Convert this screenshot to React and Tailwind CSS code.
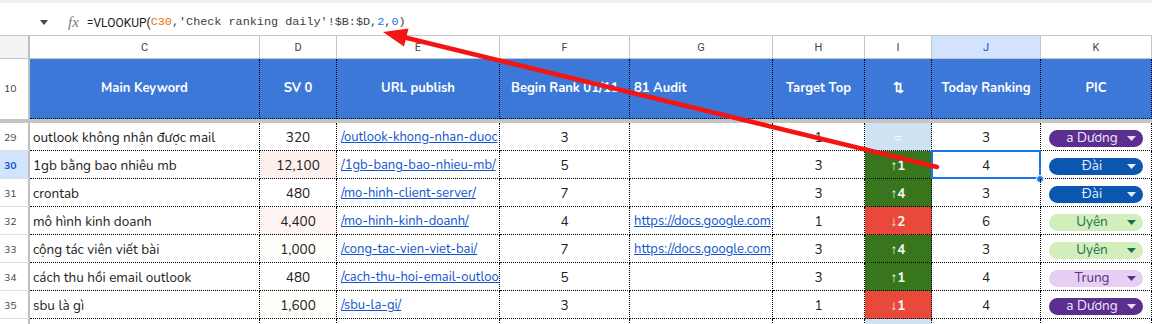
const cols = "grid grid-cols-[30px_230px_77px_163px_130px_143px_92px_67px_109px_111px]";

const rows = [
  { n: 29, kw: "outlook không nhận được mail", sv: "320", svBg: "", url: "/outlook-khong-nhan-duoc", begin: "3", audit: "", target: "1", delta: "=", today: "3", pic: "duong" },
  { n: 30, kw: "1gb bằng bao nhiêu mb", sv: "12,100", svBg: "bg-[#fcefec]", url: "/1gb-bang-bao-nhieu-mb/", begin: "5", audit: "", target: "3", delta: "↑1", today: "4", pic: "dai", selected: true },
  { n: 31, kw: "crontab", sv: "480", svBg: "", url: "/mo-hinh-client-server/", begin: "7", audit: "", target: "3", delta: "↑4", today: "3", pic: "dai" },
  { n: 32, kw: "mô hình kinh doanh", sv: "4,400", svBg: "bg-[#fdf3f0]", url: "/mo-hinh-kinh-doanh/", begin: "4", audit: "https://docs.google.com", target: "1", delta: "↓2", today: "6", pic: "uyen" },
  { n: 33, kw: "cộng tác viên viết bài", sv: "1,000", svBg: "bg-[#fefdf9]", url: "/cong-tac-vien-viet-bai/", begin: "7", audit: "https://docs.google.com", target: "3", delta: "↑4", today: "3", pic: "uyen" },
  { n: 34, kw: "cách thu hồi email outlook", sv: "480", svBg: "", url: "/cach-thu-hoi-email-outlook/", begin: "5", audit: "", target: "3", delta: "↑1", today: "4", pic: "trung" },
  { n: 35, kw: "sbu là gì", sv: "1,600", svBg: "bg-[#fefdf9]", url: "/sbu-la-gi/", begin: "3", audit: "", target: "1", delta: "↓1", today: "4", pic: "duong" },
];

const chips = {
  duong: { label: "a Dương", box: "bg-[#5b2f8f] text-[#f1e8fb]", tri: "#e9defa" },
  dai: { label: "Đài", box: "bg-[#0b57b0] text-[#e3eeff]", tri: "#e3eeff" },
  uyen: { label: "Uyên", box: "bg-[#d4edbc] text-[#11734b]", tri: "#11734b" },
  trung: { label: "Trung", box: "bg-[#e6cff2] text-[#5a3286]", tri: "#5a3286" },
};

const letters = ["C", "D", "E", "F", "G", "H", "I", "J", "K"];

const cell = "border-r border-b border-dotted border-black overflow-hidden whitespace-nowrap flex items-center pt-[3px]";

function deltaBg(d) {
  if (d === "=") return "bg-[#cfe2f3]";
  if (d.startsWith("↑")) return "bg-[#38761d]";
  return "bg-[#e8493b]";
}

function Chip({ kind }) {
  const c = chips[kind];
  return (
    <div className={`mx-auto w-[94px] h-[17px] rounded-full flex items-center pl-2 pr-[7px] ${c.box}`}>
      <span className="flex-1 text-center text-[13.5px] leading-none">{c.label}</span>
      <svg width="9" height="5" viewBox="0 0 9 5"><polygon points="0,0 9,0 4.5,5" fill={c.tri} /></svg>
    </div>
  );
}

function Row({ r }) {
  return (
    <div className={`${cols} h-[28px]`}>
      <div className={`border-r-2 border-r-[#c0c0c0] border-b border-b-[#e1e1e1] flex items-center pl-[4px] pt-[3px] text-[10.5px] ${r.selected ? "bg-[#d3e3fd] text-[#0b57d0] font-bold" : "text-[#444] bg-white"}`}>{r.n}</div>
      <div className={`${cell} pl-[3px]`}>{r.kw}</div>
      <div className={`${cell} justify-center ${r.svBg}`}>{r.sv}</div>
      <div className={`${cell} pl-[4px]`}><span className="underline text-[13px] text-[#1155cc]">{r.url}</span></div>
      <div className={`${cell} justify-center`}>{r.begin}</div>
      <div className={`${cell} pl-[4px]`}>{r.audit && <span className="underline text-[13px] text-[#1155cc]">{r.audit}</span>}</div>
      <div className={`${cell} justify-center`}>{r.target}</div>
      <div className={`${cell} justify-center text-[#f4f8f2] font-bold ${deltaBg(r.delta)}`}>{r.delta}</div>
      <div className={`${cell} justify-center relative overflow-visible`}>
        {r.today}
        {r.selected && (
          <>
            <div className="absolute -top-[1px] -left-[1px] -right-[1px] -bottom-[1px] border-2 border-[#1a73e8]" />
            <div className="absolute -right-[4px] -bottom-[5px] w-[8px] h-[8px] rounded-full bg-[#1a73e8] border border-white" />
          </>
        )}
      </div>
      <div className={`${cell}`}><Chip kind={r.pic} /></div>
    </div>
  );
}

export default function App() {
  const head = "border-r border-b border-dotted border-black flex items-center whitespace-nowrap overflow-hidden";
  return (
    <div className="relative w-[1152px] h-[324px] overflow-hidden bg-white font-['Nunito','Noto_Sans',sans-serif] text-[13.5px] text-[#222]">
      <div className="h-[3px] bg-[#eef0f3]" />
      <div className="h-[33px] flex items-center pt-[7px] border-b border-[#c4c7c5]">
        <svg className="ml-[40px]" width="8" height="5" viewBox="0 0 8 5"><polygon points="0,0 8,0 4,5" fill="#444746" /></svg>
        <span className="ml-[20px] font-['Liberation_Serif',serif] italic text-[15px] text-[#777]">fx</span>
        <span className="ml-[8px] text-[12px] text-[#202124] font-['Roboto',sans-serif]">=VLOOKUP(</span>
        <span className="font-['Liberation_Mono',monospace] text-[11.8px] text-[#3c4043]">
          <span className="text-[#e8710a]">C30</span>,'Check ranking daily'!$B:$D,<span className="text-[#1a73e8]">2</span>,<span className="text-[#1a73e8]">0</span>)
        </span>
      </div>

      <div className={`${cols} h-[23px] border-b border-[#c4c7c5] text-[11px] text-[#444746] font-['Roboto',sans-serif]`}>
        <div className="bg-[#f1f3f4] border-r-2 border-[#c0c0c0]" />
        {letters.map((l) => (
          <div key={l} className={`flex items-center justify-center pt-[3px] border-r border-[#c4c7c5] ${l === "J" ? "bg-[#d3e3fd] text-[#0b57d0]" : ""}`}>{l}</div>
        ))}
      </div>

      <div className={`${cols} h-[60px] text-white font-bold text-[13px]`}>
        <div className="border-r-2 border-r-[#c0c0c0] flex items-center pl-[4px] text-[10.5px] font-normal text-[#444]">10</div>
        <div className={`${head} justify-center bg-[#3c78d8]`}>Main Keyword</div>
        <div className={`${head} justify-center bg-[#3c78d8]`}>SV 0</div>
        <div className={`${head} justify-center bg-[#3c78d8]`}>URL publish</div>
        <div className={`${head} pl-[11px] bg-[#3c78d8]`}>Begin Rank 01/11</div>
        <div className={`${head} pl-[4px] bg-[#3c78d8]`}>81 Audit</div>
        <div className={`${head} justify-center bg-[#3c78d8]`}>Target Top</div>
        <div className={`${head} justify-center bg-[#3c78d8]`}>⇅</div>
        <div className={`${head} justify-center bg-[#3c78d8]`}>Today Ranking</div>
        <div className={`${head} justify-center bg-[#3c78d8]`}>PIC</div>
      </div>

      <div className="h-[4px] bg-[#c4c4c4]" />

      {rows.map((r) => (
        <Row key={r.n} r={r} />
      ))}

      <div className={`${cols} h-[28px]`}>
        <div className="border-r-2 border-r-[#c0c0c0]" />
        <div className={cell} />
        <div className={cell} />
        <div className={cell} />
        <div className={cell} />
        <div className={cell} />
        <div className={cell} />
        <div className={`${cell} bg-[#cfe2f3]`} />
        <div className={cell} />
        <div className={cell} />
      </div>

      <svg className="absolute top-0 left-0 pointer-events-none" width="1152" height="324" viewBox="0 0 1152 324">
        <line x1="404" y1="37.3" x2="937" y2="167" stroke="#f41414" strokeWidth="4.5" strokeLinecap="round" />
        <polygon points="383,32 408.5,28.5 404,46.5" fill="#f41414" />
      </svg>
    </div>
  );
}
